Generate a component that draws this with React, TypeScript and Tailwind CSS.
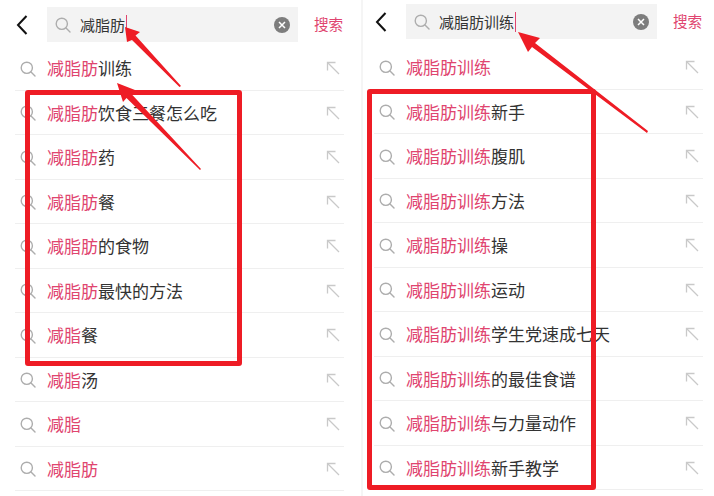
const cjk = "font-['Liberation_Sans','Noto_Sans_CJK_SC',sans-serif]";

const SearchIcon = ({ className }: { className: string }) => (
  <svg viewBox="0 0 16 16" fill="none" stroke="currentColor" strokeWidth="1.4" className={className}>
    <circle cx="6.8" cy="6.8" r="5.6" />
    <path d="M11 11l4 4" strokeLinecap="round" />
  </svg>
);

const FillIcon = () => (
  <svg viewBox="0 0 14 14" fill="none" stroke="#c9c9c9" strokeWidth="1.3" className="h-[14px] w-[14px]">
    <path d="M1.5 1.5L13 13" />
    <path d="M1.5 9.5V1.5H9.5" />
  </svg>
);

const BackIcon = () => (
  <svg viewBox="0 0 12 20" fill="none" stroke="#111" strokeWidth="2" className="h-[20px] w-[12px]">
    <path d="M10.5 1L2 10l8.5 9" />
  </svg>
);

const Row = ({ hit, rest }: { hit: string; rest?: string }) => (
  <div className="flex h-[44.5px] shrink-0 items-center border-b border-[#efefef] pt-[2px]">
    <SearchIcon className="ml-[5px] h-[16px] w-[16px] text-[#adadad]" />
    <div className="ml-[11px] flex-1 pt-[2px] text-[17px] leading-none whitespace-nowrap text-[#333]">
      <span className="text-[#e0456f]">{hit}</span>
      {rest}
    </div>
    <div className="mr-[4px] pb-[1px]">
      <FillIcon />
    </div>
  </div>
);

const Panel = ({ query, top, rows, className }: {
  query: string;
  top: string;
  rows: [string, string?][];
  className: string;
}) => (
  <div className={className}>
    <div className={`flex h-[46px] items-start ${top}`}>
      <div className="flex h-[35px] w-[47px] items-center pl-[16px]">
        <BackIcon />
      </div>
      <div className="flex h-[35px] w-[251px] items-center bg-[#f3f3f3] pl-[8px]">
        <SearchIcon className="h-[16px] w-[16px] text-[#adadad]" />
        <span className="ml-[9px] pt-[2px] text-[15px] leading-none text-[#333]">{query}</span>
        <span className="ml-[1px] h-[20px] w-[1px] bg-[#e0456f]" />
        <span className="mr-[8px] ml-auto flex h-[16px] w-[16px] items-center justify-center rounded-full bg-[#7d7d7d]">
          <svg viewBox="0 0 8 8" stroke="#fff" strokeWidth="1.5" className="h-[8px] w-[8px]">
            <path d="M1 1l6 6M7 1L1 7" />
          </svg>
        </span>
      </div>
      <span className="ml-[16px] flex h-[35px] items-center pt-[2px] text-[14.6px] leading-none text-[#e0456f]">搜索</span>
    </div>
    <div className="mx-[15px] flex flex-col">
      {rows.map(([hit, rest], i) => (
        <Row key={i} hit={hit} rest={rest} />
      ))}
    </div>
  </div>
);

const left: [string, string?][] = [
  ['减脂肪', '训练'],
  ['减脂肪', '饮食三餐怎么吃'],
  ['减脂肪', '药'],
  ['减脂肪', '餐'],
  ['减脂肪', '的食物'],
  ['减脂肪', '最快的方法'],
  ['减脂', '餐'],
  ['减脂', '汤'],
  ['减脂'],
  ['减脂肪'],
];

const right: [string, string?][] = [
  ['减脂肪训练'],
  ['减脂肪训练', '新手'],
  ['减脂肪训练', '腹肌'],
  ['减脂肪训练', '方法'],
  ['减脂肪训练', '操'],
  ['减脂肪训练', '运动'],
  ['减脂肪训练', '学生党速成七天'],
  ['减脂肪训练', '的最佳食谱'],
  ['减脂肪训练', '与力量动作'],
  ['减脂肪训练', '新手教学'],
];

// Red marks drawn on top of the screenshots
const Arrow = ({ d }: { d: string }) => <path d={d} fill="#ee1c25" />;

export default function App() {
  return (
    <div className={`relative flex h-[496px] w-[714px] overflow-hidden bg-white ${cjk}`}>
      <Panel query="减脂肪" top="pt-[7px]" rows={left} className="h-full w-[359px] shrink-0" />
      <Panel query="减脂肪训练" top="pt-[5px]" rows={right} className="-mt-[1px] h-full w-[359px] shrink-0" />
      <div className="absolute top-0 left-[361px] h-full w-[2px] bg-[#f5f5f5]" />

      <div className="absolute top-[90px] left-[25px] h-[276px] w-[217px] rounded-[3px] border-[5px] border-[#ee1c25]" />
      <div className="absolute top-[89px] left-[367px] h-[401px] w-[229px] rounded-[3px] border-[5px] border-[#ee1c25]" />

      <svg viewBox="0 0 714 496" className="pointer-events-none absolute top-0 left-0 h-[496px] w-[714px]">
        <Arrow d="M125 27L140 32L135.5 35.5L181 86L179.5 87L132 40L127 42Z" />
        <Arrow d="M117 83L135 90L131 93.5L201 169L200 170L126.5 98L123 102Z" />
        <Arrow d="M518 32L540 38L535 43L648 131L647 133L532 47L528 52Z" />
      </svg>
    </div>
  );
}
